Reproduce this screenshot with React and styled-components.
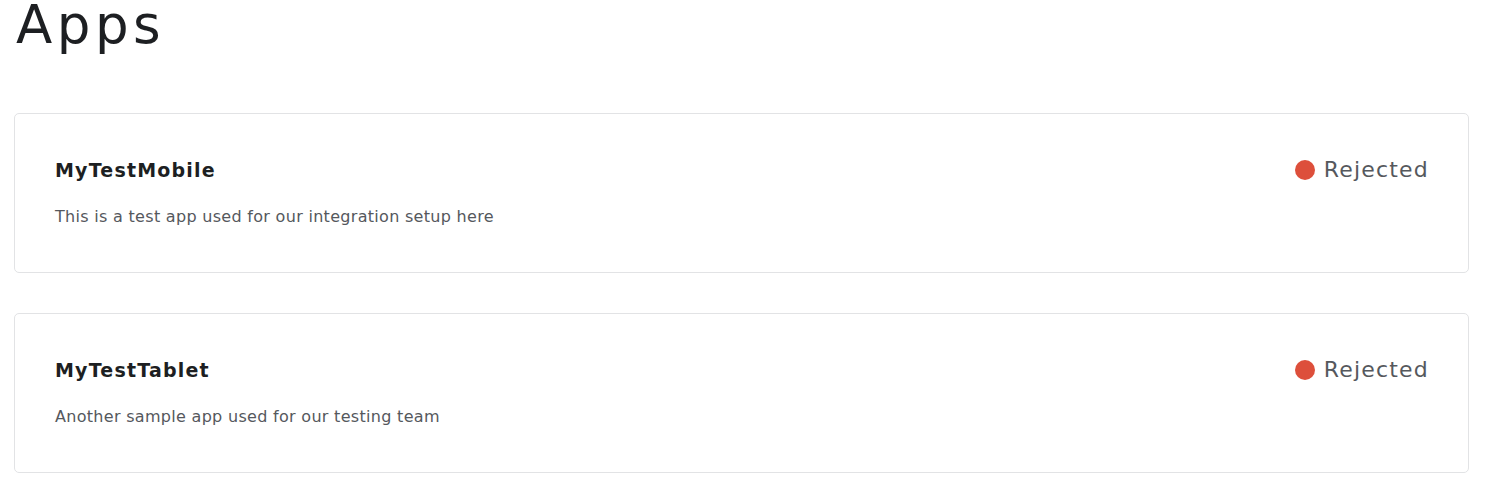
import React from "react"
import styled, { createGlobalStyle } from "styled-components"

const GlobalStyle = createGlobalStyle`
  html, body {
    margin: 0;
    padding: 0;
    background: #ffffff;
    font-family: "DejaVu Sans", "Open Sans", sans-serif;
    color: #1d1f22;
  }
`

const colors = {
  text: "#1d1f22",
  muted: "#55585d",
  border: "#e2e3e5",
  rejected: "#dd4f3b",
}

const Page = styled.main`
  padding: 0 39px 0 14px;
`

const Heading = styled.h1`
  margin: 0 0 0 2px;
  font-size: 53px;
  font-weight: 400;
  line-height: 50px;
  letter-spacing: 4.5px;
  color: ${colors.text};
`

const List = styled.section`
  display: flex;
  flex-direction: column;
  gap: 40px;
  padding-top: 63px;
`

const Card = styled.article`
  display: flex;
  justify-content: space-between;
  align-items: flex-start;
  height: 160px;
  box-sizing: border-box;
  padding: 42px 40px 0 40px;
  border: 1px solid ${colors.border};
  border-radius: 5px;
  background: #fff;
`

const Info = styled.div`
  display: flex;
  flex-direction: column;
  gap: 22px;
`

const Name = styled.h4`
  margin: 0;
  font-size: 19px;
  font-weight: 700;
  line-height: 28px;
  letter-spacing: 1.2px;
  color: ${colors.text};
`

const Description = styled.p`
  margin: 0;
  font-size: 16px;
  line-height: 22px;
  letter-spacing: 0.3px;
  color: ${colors.muted};
`

const Status = styled.div`
  display: flex;
  align-items: center;
  gap: 9px;
  margin-right: -1px;
  font-size: 22px;
  line-height: 28px;
  letter-spacing: 1.2px;
  color: ${colors.muted};
`

const Dot = styled.span`
  width: 20px;
  height: 20px;
  border-radius: 50%;
  background: ${(p) => p.$color};
`

const apps = [
  {
    name: "MyTestMobile",
    description: "This is a test app used for our integration setup here",
    status: "Rejected",
  },
  {
    name: "MyTestTablet",
    description: "Another sample app used for our testing team",
    status: "Rejected",
  },
]

const App = () => {
  return (
    <>
      <GlobalStyle />
      <Page>
        <Heading>Apps</Heading>
        <List>
          {apps.map((app, index) => (
            <Card key={index}>
              <Info>
                <Name>{app.name}</Name>
                <Description>{app.description}</Description>
              </Info>
              <Status>
                <Dot $color={colors.rejected} />
                {app.status}
              </Status>
            </Card>
          ))}
        </List>
      </Page>
    </>
  )
}

export default App
